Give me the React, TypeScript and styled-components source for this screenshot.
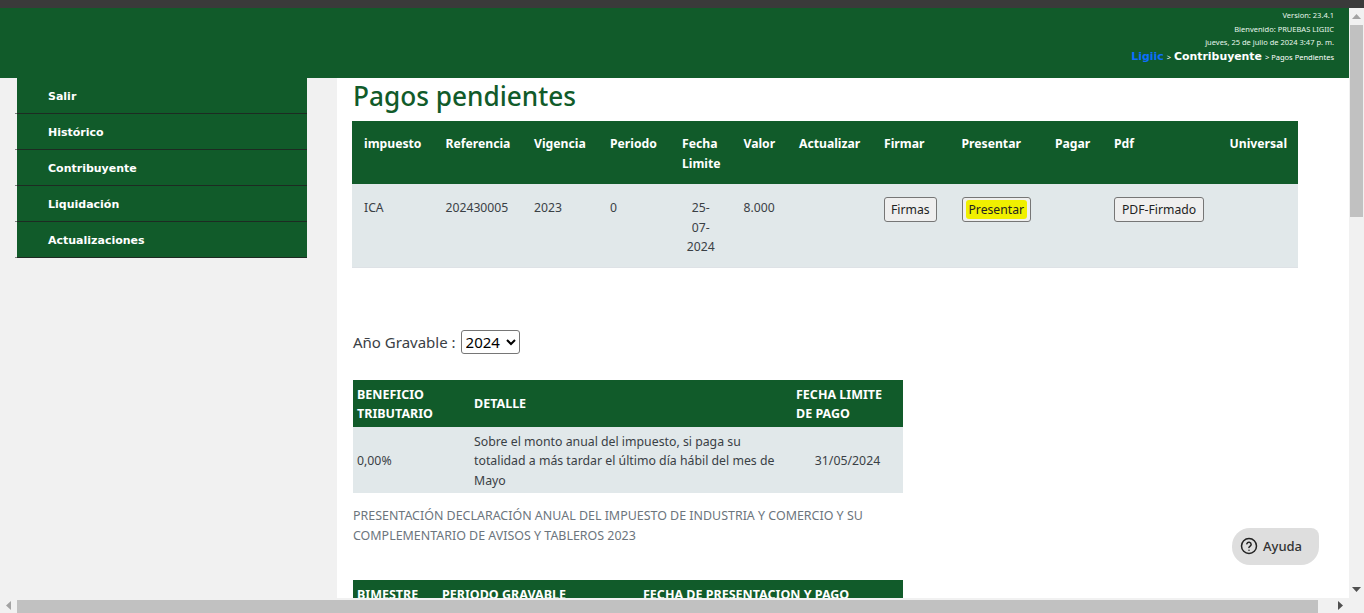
import React from "react";
import styled, { createGlobalStyle } from "styled-components";

const GlobalStyle = createGlobalStyle`
html, body {
  margin: 0;
  padding: 0;
  height: 100%;
  overflow: hidden;
  background: #fff;
}
`;

const green = "#115b2a";
const ink = "#3a4045";
const bodyFont = `"Noto Sans", "Open Sans", sans-serif`;
const wideFont = `"DejaVu Sans", Verdana, sans-serif`;

const Frame = styled.div`
width: 1364px;
height: 613px;
display: grid;
grid-template-columns: 1349px 15px;
grid-template-rows: 8px 590px 15px;
background: #3a3a3a;
font-family: ${bodyFont};
position: relative;
overflow: hidden;
`;

const TopStrip = styled.div`
grid-column: 1 / 3;
background: #3a3a3a;
`;

const Viewport = styled.div`
background: #fff;
overflow: hidden;
display: flex;
flex-direction: column;
`;

const Header = styled.header`
height: 70px;
flex: none;
background: ${green};
display: flex;
flex-direction: column;
align-items: flex-end;
padding: 1px 15px 0 0;
box-sizing: border-box;
color: #fff;
font-family: ${bodyFont};
font-size: 7.5px;
line-height: 13.5px;
`;

const HeaderLine = styled.div`
color: #e8f7ec;
`;

const Crumbs = styled.div`
display: flex;
align-items: baseline;
gap: 3px;
line-height: 13.5px;
`;

const BrandLink = styled.span`
color: #0d6efd;
font-family: ${wideFont};
font-weight: 700;
font-size: 10.9px;
`;

const CrumbStrong = styled.span`
font-family: ${wideFont};
font-weight: 700;
font-size: 10.9px;
color: #fff;
`;

const Columns = styled.div`
flex: 1;
min-height: 0;
display: flex;
`;

const Side = styled.aside`
width: 337px;
flex: none;
box-sizing: border-box;
background: #f1f1f1;
padding-left: 17px;
`;

const Menu = styled.ul`
list-style: none;
margin: 0;
padding: 0;
width: 290px;
`;

const MenuItem = styled.li`
position: relative;
height: 36px;
box-sizing: border-box;
background: ${green};
border-bottom: 1px solid #1d2b22;
padding: 2px 0 0 31px;
display: flex;
align-items: center;
color: #fff;
font-family: ${wideFont};
font-weight: 700;
font-size: 11px;
&::after {
  content: "";
  position: absolute;
  left: -2px;
  bottom: -1px;
  width: 2px;
  height: 1px;
  background: #7d8580;
}
`;

const Main = styled.main`
flex: 1;
min-width: 0;
padding: 0 0 0 15px;
overflow: hidden;
`;

const Title = styled.h1`
margin: 0 0 0 1px;
height: 43px;
color: ${green};
font-family: ${bodyFont};
font-weight: 500;
font-size: 26.2px;
line-height: 37px;
`;

const PendingTable = styled.table`
width: 946px;
table-layout: fixed;
border-collapse: collapse;
font-size: 12.2px;
line-height: 19.5px;
`;

const HeadCell = styled.th`
background: ${green};
color: #fff;
font-weight: 700;
text-align: left;
vertical-align: top;
padding: 13px 0 11px 12px;
`;

const BodyRow = styled.tr`
background: #e1e8ea;
border-bottom: 1px solid #dee2e6;
`;

const BodyCell = styled.td<{ $center?: boolean }>`
color: ${ink};
vertical-align: top;
padding: 14px ${(p) => (p.$center ? "13px" : "0")} 10px ${(p) => (p.$center ? "13px" : "12px")};
text-align: ${(p) => (p.$center ? "center" : "left")};
`;

const ActionButton = styled.button<{ $tight?: boolean }>`
display: block;
font-family: ${bodyFont};
font-size: 12.2px;
line-height: 17px;
color: #222;
height: 25px;
margin-top: -1px;
padding: 0 ${(p) => (p.$tight ? "6px" : "7px")};
background: #efefef;
border: 1px solid #767676;
border-radius: 3px;
white-space: nowrap;
`;

const Marker = styled.span`
display: inline-block;
background: #f0f000;
border-radius: 3px;
line-height: 19px;
padding: 0 3px;
margin: 0 -3px;
`;

const YearRow = styled.div`
margin: 62px 0 0 1px;
display: flex;
align-items: center;
gap: 5px;
height: 24px;
font-size: 15px;
color: ${ink};
`;

const YearSelect = styled.select`
font-family: ${bodyFont};
font-size: 15px;
width: 59px;
height: 24px;
padding: 0;
background: #fff;
color: #000;
border: 1px solid #767676;
border-radius: 3px;
`;

const BenefitTable = styled.table`
margin: 26px 0 0 1px;
width: 550px;
table-layout: fixed;
border-collapse: collapse;
font-size: 12.5px;
line-height: 19.5px;
`;

const SmallHead = styled.th`
background: ${green};
color: #fff;
font-weight: 700;
text-align: left;
padding: 5px 4px 3px;
`;

const SmallRow = styled.tr`
background: #e1e8ea;
`;

const SmallCell = styled.td<{ $center?: boolean }>`
color: ${ink};
font-size: 12.3px;
padding: 5px 4px 3px;
text-align: ${(p) => (p.$center ? "center" : "left")};
`;

const Note = styled.p`
width: 550px;
margin: 13px 0 0 1px;
color: #6c757d;
font-size: 12.45px;
line-height: 20px;
`;

const PeriodTable = styled(BenefitTable)`
margin-top: 34px;
`;

const VBar = styled.div`
background: #f1f1f1;
display: flex;
flex-direction: column;
align-items: center;
`;

const HBar = styled.div`
background: #f1f1f1;
display: flex;
align-items: center;
`;

const Corner = styled.div`
background: #f1f1f1;
`;

const ArrowBox = styled.div`
width: 17px;
height: 15px;
flex: none;
display: flex;
align-items: center;
justify-content: center;
`;

const VThumb = styled.div`
width: 13px;
height: 192px;
background: #c1c1c1;
`;

const VArrowBox = styled(ArrowBox)`
width: 15px;
height: 17px;
`;

const VSpacer = styled.div`
flex: 1;
`;

const HThumb = styled.div`
width: 1301px;
height: 13px;
margin-top: 2px;
background: #c1c1c1;
flex: none;
`;

const HSpacer = styled.div`
flex: 1;
`;

const HelpButton = styled.button`
position: absolute;
left: 1232px;
top: 528px;
width: 87px;
height: 37px;
box-sizing: border-box;
padding: 0 0 2px 8px;
display: flex;
align-items: center;
gap: 5px;
background: #dedede;
border: none;
border-radius: 18px 8px 18px 18px;
color: #333;
font-family: ${bodyFont};
font-weight: 500;
font-size: 13px;
`;

const pendingHeads = [
  { label: "impuesto", w: 81.5 },
  { label: "Referencia", w: 88.5 },
  { label: "Vigencia", w: 76 },
  { label: "Periodo", w: 72 },
  { label: "Fecha Limite", w: 61.5 },
  { label: "Valor", w: 55.5 },
  { label: "Actualizar", w: 85 },
  { label: "Firmar", w: 77.5 },
  { label: "Presentar", w: 93.5 },
  { label: "Pagar", w: 59 },
  { label: "Pdf", w: 115.5 },
  { label: "Universal", w: 80.5 },
];

const menu = ["Salir", "Histórico", "Contribuyente", "Liquidación", "Actualizaciones"];

function HelpIcon() {
  return (
    <svg width="18" height="18" viewBox="0 0 24 24" fill="none" stroke="#222" strokeWidth="2" strokeLinecap="round">
      <circle cx="12" cy="12" r="10" />
      <path d="M9.1 9a3 3 0 0 1 5.8 1c0 2-3 2.6-3 4" />
      <path d="M12 17.6v.1" />
    </svg>
  );
}

export default function App() {
  return (
    <Frame>
      <GlobalStyle />
      <TopStrip />
      <Viewport>
        <Header>
          <HeaderLine>Version: 23.4.1</HeaderLine>
          <HeaderLine>Bienvenido: PRUEBAS LIGIIC</HeaderLine>
          <HeaderLine>jueves, 25 de julio de 2024 3:47 p. m.</HeaderLine>
          <Crumbs>
            <BrandLink>Ligiic</BrandLink>
            <span>&gt;</span>
            <CrumbStrong>Contribuyente</CrumbStrong>
            <span>&gt; Pagos Pendientes</span>
          </Crumbs>
        </Header>
        <Columns>
          <Side>
            <Menu>
              {menu.map((m) => (
                <MenuItem key={m}>{m}</MenuItem>
              ))}
            </Menu>
          </Side>
          <Main>
            <Title>Pagos pendientes</Title>
            <PendingTable>
              <colgroup>
                {pendingHeads.map((h) => (
                  <col key={h.label} width={h.w} />
                ))}
              </colgroup>
              <thead>
                <tr>
                  {pendingHeads.map((h) => (
                    <HeadCell key={h.label}>{h.label}</HeadCell>
                  ))}
                </tr>
              </thead>
              <tbody>
                <BodyRow>
                  <BodyCell>ICA</BodyCell>
                  <BodyCell>202430005</BodyCell>
                  <BodyCell>2023</BodyCell>
                  <BodyCell>0</BodyCell>
                  <BodyCell $center>25-07-2024</BodyCell>
                  <BodyCell>8.000</BodyCell>
                  <BodyCell />
                  <BodyCell>
                    <ActionButton $tight>Firmas</ActionButton>
                  </BodyCell>
                  <BodyCell>
                    <ActionButton $tight>
                      <Marker>Presentar</Marker>
                    </ActionButton>
                  </BodyCell>
                  <BodyCell />
                  <BodyCell>
                    <ActionButton>PDF-Firmado</ActionButton>
                  </BodyCell>
                  <BodyCell />
                </BodyRow>
              </tbody>
            </PendingTable>
            <YearRow>
              Año Gravable :
              <YearSelect defaultValue="2024">
                <option>2024</option>
                <option>2023</option>
              </YearSelect>
            </YearRow>
            <BenefitTable>
              <colgroup>
                <col width={117} />
                <col width={322} />
                <col width={111} />
              </colgroup>
              <thead>
                <tr>
                  <SmallHead>BENEFICIO TRIBUTARIO</SmallHead>
                  <SmallHead>DETALLE</SmallHead>
                  <SmallHead>FECHA LIMITE DE PAGO</SmallHead>
                </tr>
              </thead>
              <tbody>
                <SmallRow>
                  <SmallCell>0,00%</SmallCell>
                  <SmallCell>
                    Sobre el monto anual del impuesto, si paga su totalidad a más tardar el último día hábil del mes de Mayo
                  </SmallCell>
                  <SmallCell $center>31/05/2024</SmallCell>
                </SmallRow>
              </tbody>
            </BenefitTable>
            <Note>
              PRESENTACIÓN DECLARACIÓN ANUAL DEL IMPUESTO DE INDUSTRIA Y COMERCIO Y SU COMPLEMENTARIO DE AVISOS Y TABLEROS 2023
            </Note>
            <PeriodTable>
              <colgroup>
                <col width={85} />
                <col width={201} />
                <col width={264} />
              </colgroup>
              <thead>
                <tr>
                  <SmallHead>BIMESTRE</SmallHead>
                  <SmallHead>PERIODO GRAVABLE</SmallHead>
                  <SmallHead>FECHA DE PRESENTACION Y PAGO</SmallHead>
                </tr>
              </thead>
            </PeriodTable>
          </Main>
        </Columns>
      </Viewport>
      <VBar>
        <VArrowBox>
          <svg width="9" height="5" viewBox="0 0 9 5"><path d="M4.5 0L9 5H0z" fill="#a3a3a3" /></svg>
        </VArrowBox>
        <VThumb />
        <VSpacer />
        <VArrowBox>
          <svg width="9" height="5" viewBox="0 0 9 5"><path d="M0 0h9L4.5 5z" fill="#505050" /></svg>
        </VArrowBox>
      </VBar>
      <HBar>
        <ArrowBox>
          <svg width="5" height="9" viewBox="0 0 5 9"><path d="M5 0v9L0 4.5z" fill="#a3a3a3" /></svg>
        </ArrowBox>
        <HThumb />
        <HSpacer />
        <ArrowBox>
          <svg width="5" height="9" viewBox="0 0 5 9"><path d="M0 0v9l5-4.5z" fill="#505050" /></svg>
        </ArrowBox>
      </HBar>
      <Corner />
      <HelpButton>
        <HelpIcon />
        Ayuda
      </HelpButton>
    </Frame>
  );
}
